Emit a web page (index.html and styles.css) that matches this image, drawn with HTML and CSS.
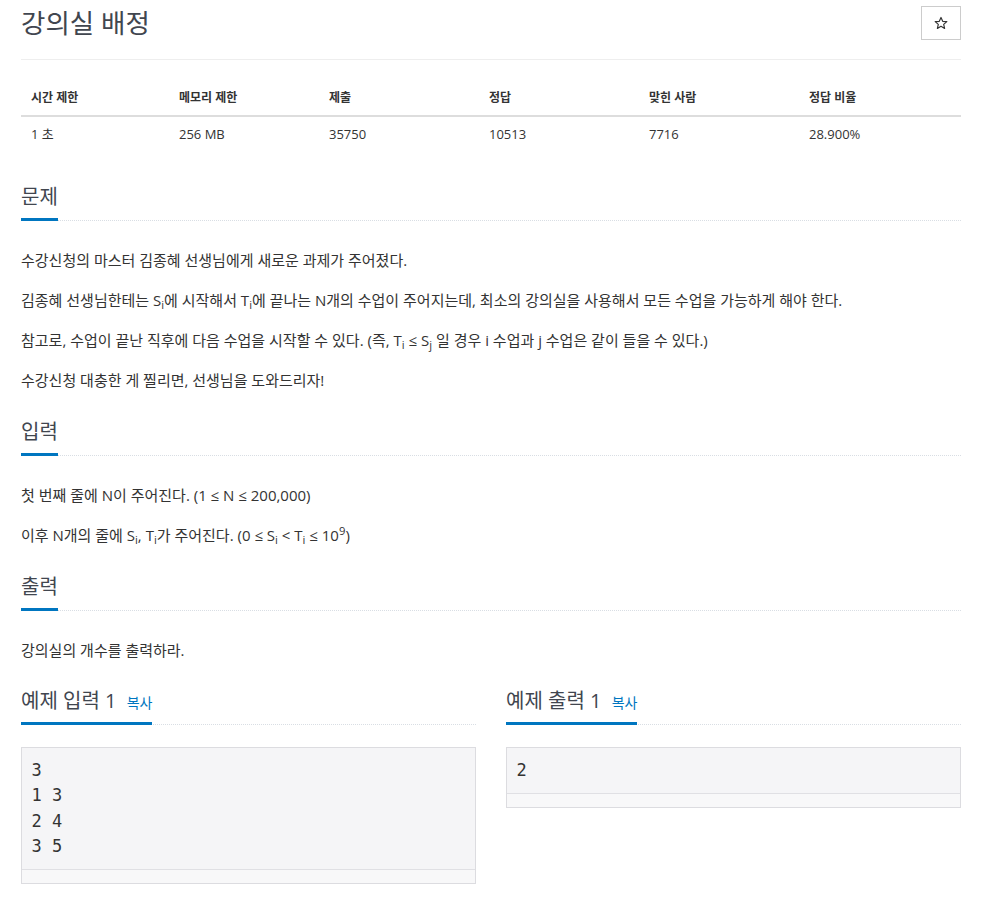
FILE: index.html
```html
<!DOCTYPE html>
<html lang="ko">
<head>
<meta charset="utf-8">
<title>강의실 배정</title>
<link rel="stylesheet" href="styles.css">
</head>
<body>
<div class="page">
  <div class="page-header">
    <h1 class="title">강의실 배정</h1>
    <button class="star-btn" type="button" aria-label="즐겨찾기">
      <svg class="star-icon" width="14" height="14" viewBox="0 0 24 24"><path d="M12 2.5l2.9 6.6 7.1.6-5.4 4.7 1.6 7-6.2-3.7-6.2 3.7 1.6-7L2 9.7l7.1-.6z" fill="none" stroke="#333" stroke-width="2" stroke-linejoin="round"/></svg>
    </button>
  </div>

  <table class="info">
    <colgroup>
      <col class="c1"><col class="c2"><col class="c3"><col class="c4"><col class="c5"><col class="c6">
    </colgroup>
    <thead>
      <tr>
        <th>시간 제한</th>
        <th>메모리 제한</th>
        <th>제출</th>
        <th>정답</th>
        <th>맞힌 사람</th>
        <th>정답 비율</th>
      </tr>
    </thead>
    <tbody>
      <tr>
        <td>1 초</td>
        <td>256 MB</td>
        <td>35750</td>
        <td>10513</td>
        <td>7716</td>
        <td>28.900%</td>
      </tr>
    </tbody>
  </table>

  <section class="section first">
    <div class="headline"><h2>문제</h2></div>
    <div class="text">
      <p>수강신청의 마스터 김종혜 선생님에게 새로운 과제가 주어졌다.</p>
      <p>김종혜 선생님한테는 S<sub>i</sub>에 시작해서 T<sub>i</sub>에 끝나는 N개의 수업이 주어지는데, 최소의 강의실을 사용해서 모든 수업을 가능하게 해야 한다.</p>
      <p>참고로, 수업이 끝난 직후에 다음 수업을 시작할 수 있다. (즉, T<sub>i</sub> ≤ S<sub>j</sub> 일 경우 i 수업과 j 수업은 같이 들을 수 있다.)</p>
      <p>수강신청 대충한 게 찔리면, 선생님을 도와드리자!</p>
    </div>
  </section>

  <section class="section">
    <div class="headline"><h2>입력</h2></div>
    <div class="text">
      <p>첫 번째 줄에 N이 주어진다. (1 ≤ N ≤ 200,000)</p>
      <p>이후 N개의 줄에 S<sub>i</sub>, T<sub>i</sub>가 주어진다. (0 ≤ S<sub>i</sub> &lt; T<sub>i</sub> ≤ 10<sup>9</sup>)</p>
    </div>
  </section>

  <section class="section">
    <div class="headline"><h2>출력</h2></div>
    <div class="text">
      <p>강의실의 개수를 출력하라.</p>
    </div>
  </section>

  <div class="samples">
    <section class="sample">
      <div class="headline"><h2>예제 입력 1 <a class="copy" href="#">복사</a></h2></div>
      <div class="sample-box">
        <pre class="sampledata">3
1 3
2 4
3 5</pre>
        <div class="scroll-strip"></div>
      </div>
    </section>
    <section class="sample">
      <div class="headline"><h2>예제 출력 1 <a class="copy" href="#">복사</a></h2></div>
      <div class="sample-box">
        <pre class="sampledata">2</pre>
        <div class="scroll-strip"></div>
      </div>
    </section>
  </div>
</div>
</body>
</html>
```

FILE: styles.css
```css
* { box-sizing: border-box; }

html, body {
  margin: 0;
  padding: 0;
  background: #fff;
}

body {
  font-family: "Open Sans", "Noto Sans CJK KR", sans-serif;
  font-size: 15px;
  color: #333;
}

.page {
  width: 940px;
  margin-left: 21px;
}

.page-header {
  display: flex;
  align-items: center;
  justify-content: space-between;
  height: 60px;
  padding: 6px 0 19px;
  border-bottom: 1px solid #eee;
}

.title {
  margin: 0;
  font-size: 26.5px;
  font-weight: 400;
  line-height: 34px;
  color: #41464f;
}

.star-btn {
  display: flex;
  align-items: center;
  justify-content: center;
  width: 40px;
  height: 34px;
  padding: 0;
  margin: 0;
  border: 1px solid #ccc;
  background: #fff;
}

.star-icon { display: block; }

.info {
  width: 100%;
  margin-top: 19px;
  border-collapse: collapse;
  table-layout: fixed;
  font-size: 13px;
}

.info .c1 { width: 148px; }
.info .c2 { width: 150px; }
.info .c3 { width: 160px; }
.info .c4 { width: 160px; }
.info .c5 { width: 160px; }
.info .c6 { width: 162px; }

.info th {
  text-align: left;
  font-weight: 700;
  font-size: 12px;
  line-height: 20px;
  padding: 9px 10px 7px;
  border-bottom: 2px solid #ddd;
}

.info td {
  line-height: 20px;
  padding: 7px 10px 9px;
}

.section { margin-top: 25px; }
.section.first { margin-top: 32px; }

.headline {
  border-bottom: 1px dotted #d9dee4;
  margin-bottom: 24px;
}

.headline h2 {
  display: inline-block;
  height: 36px;
  margin: 0 0 -1px;
  padding-bottom: 9px;
  font-size: 20px;
  font-weight: 400;
  line-height: 24px;
  color: #41464f;
  border-bottom: 3px solid #0076c0;
}

.text p {
  margin: 0 0 10px;
  line-height: 30px;
}

sub, sup {
  font-size: 75%;
  line-height: 0;
}
sub { vertical-align: -0.25em; }
sup { vertical-align: 0.5em; }

.copy {
  margin-left: 5px;
  font-size: 14px;
  line-height: 1;
  color: #0076c0;
  text-decoration: none;
}

.samples {
  display: grid;
  grid-template-columns: 1fr 1fr;
  column-gap: 30px;
  margin-top: 24px;
  align-items: start;
}

.sample .headline { margin-bottom: 22px; }

.sample-box {
  border: 1px solid #dcdce0;
  background: #f5f5f7;
}

.sampledata {
  margin: 0;
  padding: 9.5px;
  font-family: "DejaVu Sans Mono", monospace;
  font-size: 17px;
  line-height: 25.5px;
  color: #333;
  white-space: pre;
}

.scroll-strip {
  height: 14px;
  border-top: 1px solid #e0e0e4;
  background: #f8f8f9;
}
```
